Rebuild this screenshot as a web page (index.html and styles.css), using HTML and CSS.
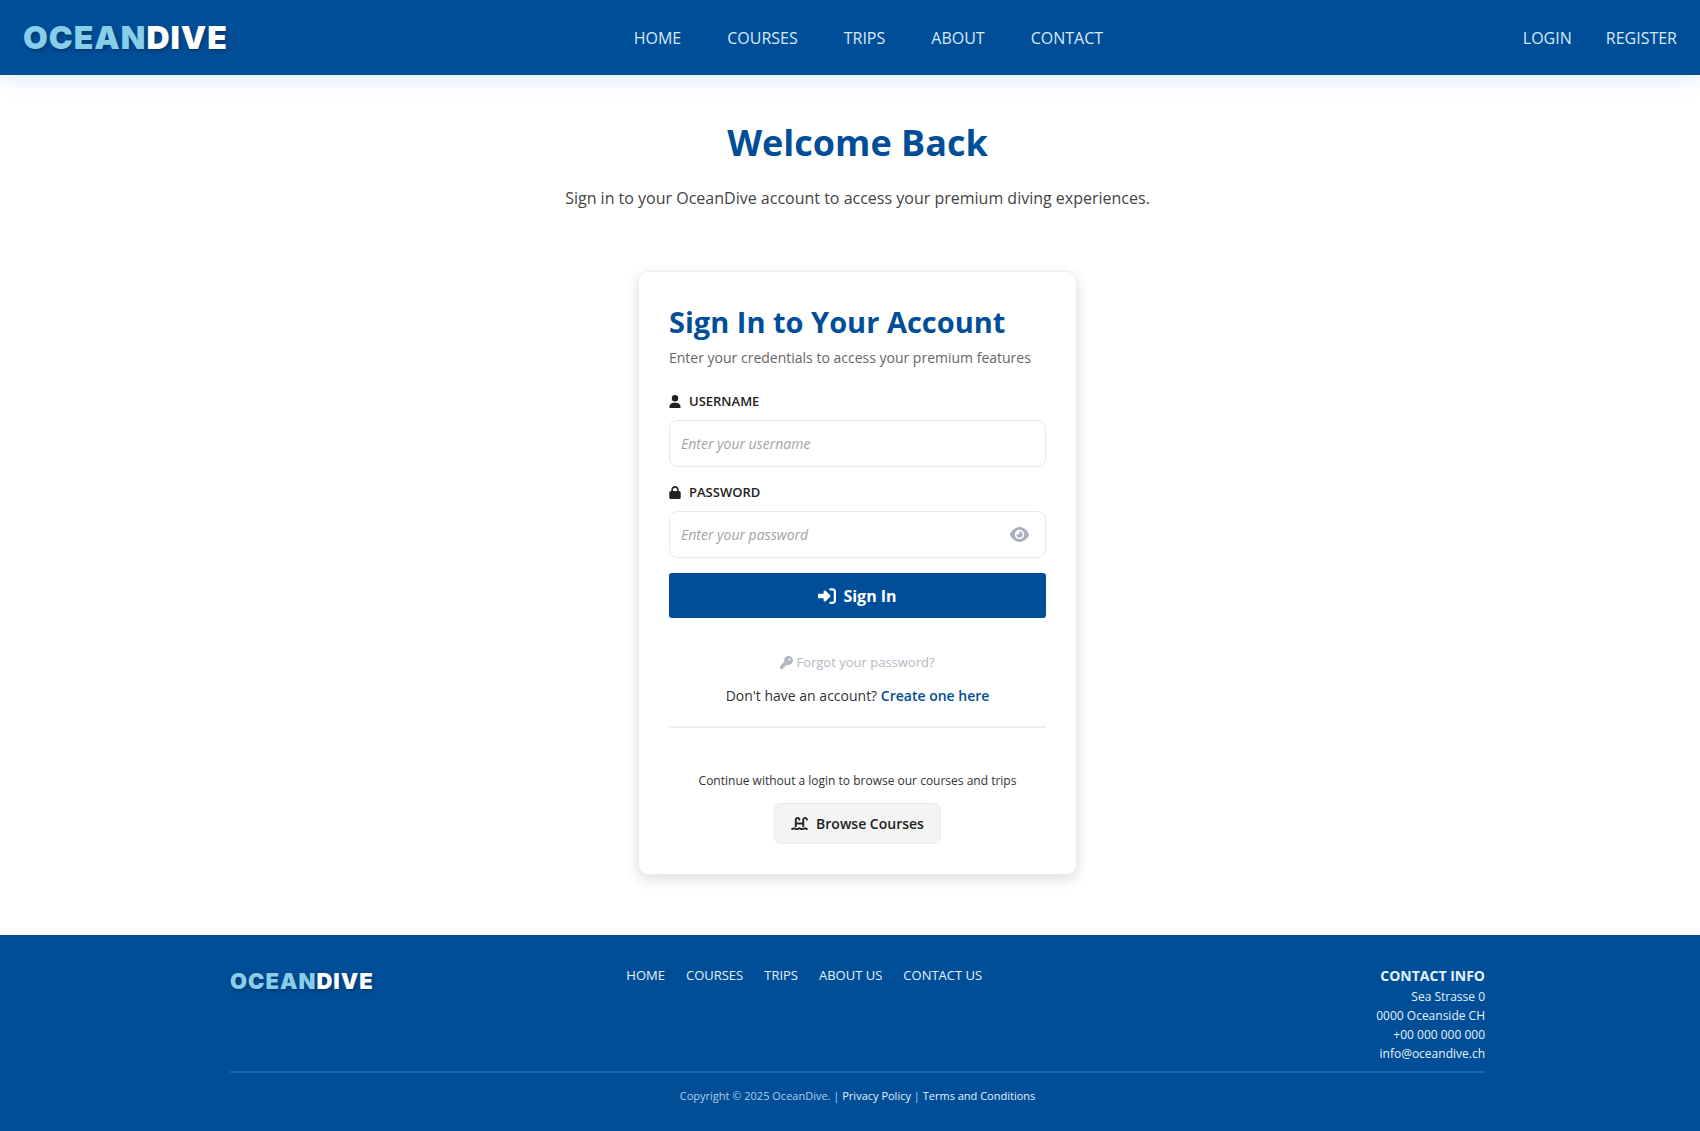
FILE: index.html
```html
<!DOCTYPE html>
<html lang="en">
<head>
<meta charset="utf-8">
<meta name="viewport" content="width=device-width, initial-scale=1">
<title>OceanDive – Sign In</title>
<link rel="stylesheet" href="styles.css">
</head>
<body>
<header class="site-header">
  <a class="logo" href="#"><span class="logo-light">OCEAN</span>DIVE</a>
  <nav class="main-nav" aria-label="Main">
    <a href="#">HOME</a>
    <a href="#">COURSES</a>
    <a href="#">TRIPS</a>
    <a href="#">ABOUT</a>
    <a href="#">CONTACT</a>
  </nav>
  <nav class="user-nav" aria-label="Account">
    <a href="#">LOGIN</a>
    <a href="#">REGISTER</a>
  </nav>
</header>

<main class="page">
  <h1 class="page-title">Welcome Back</h1>
  <p class="page-intro">Sign in to your OceanDive account to access your premium diving experiences.</p>

  <section class="card">
    <h2 class="card-title">Sign In to Your Account</h2>
    <p class="card-subtitle">Enter your credentials to access your premium features</p>

    <form class="login-form">
      <label class="field-label" for="username">
        <svg class="icon icon-label" viewBox="0 0 448 512" aria-hidden="true"><path d="M224 256A128 128 0 1 0 224 0a128 128 0 1 0 0 256zm-45.7 48C79.8 304 0 383.8 0 482.3C0 498.7 13.3 512 29.7 512H418.3c16.4 0 29.7-13.3 29.7-29.7C448 383.8 368.2 304 269.7 304H178.3z"/></svg>
        USERNAME
      </label>
      <input class="field-input" id="username" type="text" placeholder="Enter your username">

      <label class="field-label" for="password">
        <svg class="icon icon-label" viewBox="0 0 448 512" aria-hidden="true"><path d="M144 144v48H304V144c0-44.2-35.8-80-80-80s-80 35.8-80 80zM80 192V144C80 64.5 144.5 0 224 0s144 64.5 144 144v48h16c35.3 0 64 28.7 64 64V448c0 35.3-28.7 64-64 64H64c-35.3 0-64-28.7-64-64V256c0-35.3 28.7-64 64-64H80z"/></svg>
        PASSWORD
      </label>
      <div class="password-field">
        <input class="field-input" id="password" type="password" placeholder="Enter your password">
        <button class="toggle-password" type="button" aria-label="Show password">
          <svg class="icon icon-eye" viewBox="0 0 576 512" aria-hidden="true"><path d="M288 32c-80.8 0-145.5 36.8-192.6 80.6C48.6 156 17.3 208 2.5 243.7c-3.3 7.9-3.3 16.7 0 24.6C17.3 304 48.6 356 95.4 399.4C142.5 443.2 207.2 480 288 480s145.5-36.8 192.6-80.6c46.8-43.5 78.1-95.4 93-131.1c3.3-7.9 3.3-16.7 0-24.6c-14.9-35.7-46.2-87.7-93-131.1C433.5 68.8 368.8 32 288 32zM144 256a144 144 0 1 1 288 0 144 144 0 1 1 -288 0zm144-64c0 35.3-28.7 64-64 64c-7.1 0-13.9-1.2-20.3-3.3c-5.5-1.8-11.9 1.6-11.7 7.4c.3 6.9 1.3 13.8 3.2 20.7c13.7 51.2 66.4 81.6 117.6 67.9s81.6-66.4 67.9-117.6c-11.1-41.5-47.8-69.4-88.6-71.1c-5.8-.2-9.2 6.1-7.4 11.7c2.1 6.4 3.3 13.2 3.3 20.3z"/></svg>
        </button>
      </div>

      <button class="btn-primary" type="submit">
        <svg class="icon icon-signin" viewBox="0 0 512 512" aria-hidden="true"><path d="M217.9 105.9L340.7 228.7c7.2 7.2 11.3 17.1 11.3 27.3s-4.1 20.1-11.3 27.3L217.9 406.1c-6.4 6.4-15 9.9-24 9.9c-18.7 0-33.9-15.2-33.9-33.9l0-62.1L32 320c-17.7 0-32-14.3-32-32l0-64c0-17.7 14.3-32 32-32l128 0 0-62.1c0-18.7 15.2-33.9 33.9-33.9c9 0 17.6 3.6 24 9.9zM352 416l64 0c17.7 0 32-14.3 32-32l0-256c0-17.7-14.3-32-32-32l-64 0c-17.7 0-32-14.3-32-32s14.3-32 32-32l64 0c53 0 96 43 96 96l0 256c0 53-43 96-96 96l-64 0c-17.7 0-32-14.3-32-32s14.3-32 32-32z"/></svg>
        Sign In
      </button>
    </form>

    <a class="forgot" href="#">
      <svg class="icon icon-key" viewBox="0 0 512 512" aria-hidden="true"><path d="M336 352c97.2 0 176-78.8 176-176S433.2 0 336 0S160 78.8 160 176c0 18.7 2.9 36.8 8.3 53.7L7 391c-4.5 4.5-7 10.6-7 17v80c0 13.3 10.7 24 24 24h80c13.3 0 24-10.7 24-24V448h40c13.3 0 24-10.7 24-24V384h40c6.4 0 12.5-2.5 17-7l33.3-33.3c16.9 5.4 35 8.3 53.7 8.3zM376 96a40 40 0 1 1 0 80 40 40 0 1 1 0-80z"/></svg>
      Forgot your password?
    </a>
    <p class="signup">Don't have an account? <a href="#">Create one here</a></p>

    <div class="guest">
      <p class="guest-text">Continue without a login to browse our courses and trips</p>
      <a class="btn-secondary" href="#">
        <svg class="icon icon-ladder" viewBox="0 0 576 512" aria-hidden="true"><path d="M128 127.7C128 74.9 170.9 32 223.7 32c48.3 0 89 36 95 83.9l1 8.2c2.2 17.5-10.2 33.5-27.8 35.7s-33.5-10.2-35.7-27.8l-1-8.2c-2-15.9-15.5-27.8-31.5-27.8c-17.5 0-31.7 14.2-31.7 31.7V224H384V127.7C384 74.9 426.9 32 479.7 32c48.3 0 89 36 95 83.9l1 8.2c2.2 17.5-10.2 33.5-27.8 35.7s-33.5-10.2-35.7-27.8l-1-8.2c-2-15.9-15.5-27.8-31.5-27.8c-17.5 0-31.7 14.2-31.7 31.7V361c-1.6 1-3.3 2-4.8 3.1c-18 12.4-40.1 20.3-59.2 20.3h0V288H192v96.5c-19 0-41.2-7.9-59.1-20.3c-1.6-1.1-3.2-2.2-4.9-3.1V127.7zM306.5 389.9C329 405.4 356.5 416 384 416c26.9 0 55.4-10.8 77.4-26.1l0 0c11.9-8.5 28.1-7.8 39.2 1.7c14.4 11.9 32.5 21 50.6 25.2c17.2 4 27.9 21.2 23.9 38.4s-21.2 27.9-38.4 23.9c-24.5-5.7-44.9-16.5-58.2-25C449.5 469.7 417 480 384 480c-31.9 0-60.6-9.9-80.4-18.9c-5.8-2.7-11.1-5.3-15.6-7.7c-4.5 2.4-9.7 5.1-15.6 7.7c-19.8 9-48.5 18.9-80.4 18.9c-33 0-65.5-10.3-94.5-25.8c-13.4 8.4-33.7 19.3-58.2 25c-17.2 4-34.4-6.7-38.4-23.9s6.7-34.4 23.9-38.4c18.1-4.2 36.2-13.3 50.6-25.2c11.1-9.4 27.3-10.1 39.2-1.7l0 0C136.7 405.2 165.1 416 192 416c27.5 0 55-10.6 77.5-26.1c11.1-7.9 25.9-7.9 37 0z"/></svg>
        Browse Courses
      </a>
    </div>
  </section>
</main>

<footer class="site-footer">
  <div class="footer-inner">
    <div class="footer-top">
      <div><a class="logo logo-small" href="#"><span class="logo-light">OCEAN</span>DIVE</a></div>
      <nav class="footer-nav" aria-label="Footer">
        <a href="#">HOME</a>
        <a href="#">COURSES</a>
        <a href="#">TRIPS</a>
        <a href="#">ABOUT US</a>
        <a href="#">CONTACT US</a>
      </nav>
      <address class="contact">
        <strong class="contact-title">CONTACT INFO</strong>
        <span>Sea Strasse 0</span>
        <span>0000 Oceanside CH</span>
        <span>+00 000 000 000</span>
        <a href="#">info@oceandive.ch</a>
      </address>
    </div>
    <p class="copyright">Copyright © 2025 OceanDive. | <a href="#">Privacy Policy</a> | <a href="#">Terms and Conditions</a></p>
  </div>
</footer>
</body>
</html>
```
FILE: styles.css
```css
:root {
  --ocean: #004e98;
  --sky: #87ceeb;
  --ink: #222222;
  --line: #e8eaed;
  --muted: #b3b8c4;
}

* {
  box-sizing: border-box;
}

body {
  margin: 0;
  min-height: 100vh;
  display: flex;
  flex-direction: column;
  background: #ffffff;
  color: var(--ink);
  font-family: "Segoe UI", "Open Sans", "Noto Sans", sans-serif;
  font-size: 14px;
  line-height: 20px;
}

h1,
h2,
p {
  margin: 0;
}

a {
  color: inherit;
  text-decoration: none;
}

.icon {
  display: block;
  flex: none;
  fill: currentColor;
}

.logo {
  color: #ffffff;
  font-family: "Arial Black", Inter, sans-serif;
  font-size: 32px;
  font-weight: 900;
  line-height: 40px;
  letter-spacing: 1px;
  text-shadow: 1px 2px 4px rgba(0, 0, 0, 0.3);
}

.logo-light {
  color: var(--sky);
}

.logo-small {
  font-size: 22px;
  line-height: 32px;
}

/* Header */
.site-header {
  position: relative;
  display: flex;
  align-items: center;
  justify-content: space-between;
  min-height: 75px;
  padding: 0 23px;
  background: var(--ocean);
  box-shadow: 0 4px 20px rgba(0, 102, 255, 0.14);
  color: #d6eaf8;
  font-size: 16px;
}

.main-nav {
  display: flex;
  gap: 46px;
}

.user-nav {
  display: flex;
  gap: 34px;
  padding-left: 14px;
}

/* Page */
.page {
  flex: 1;
  display: flex;
  flex-direction: column;
  align-items: center;
  padding: 42px 0 60px 15px;
}

.page-title {
  color: var(--ocean);
  font-size: 36px;
  font-weight: 700;
  line-height: 52px;
}

.page-intro {
  margin-top: 16px;
  color: #444444;
  font-size: 16px;
  line-height: 26px;
}

/* Sign-in card */
.card {
  display: flex;
  flex-direction: column;
  width: 100%;
  max-width: 439px;
  margin-top: 60px;
  padding: 30px;
  border: 1px solid #ededed;
  border-radius: 10px;
  background: #ffffff;
  box-shadow: 0 4px 14px rgba(0, 0, 0, 0.14);
}

.card-title {
  color: var(--ocean);
  font-size: 29px;
  font-weight: 700;
  line-height: 40px;
}

.card-subtitle {
  margin-top: 6px;
  color: #666666;
  line-height: 20px;
}

.login-form {
  display: flex;
  flex-direction: column;
  margin-top: 23px;
}

.field-label {
  display: flex;
  align-items: center;
  gap: 8px;
  margin-bottom: 9px;
  font-size: 13px;
  font-weight: 600;
  line-height: 20px;
}

.icon-label {
  width: 12px;
  height: 13px;
}

.field-input {
  width: 100%;
  height: 47px;
  margin-bottom: 15px;
  padding: 0 11px;
  border: 1px solid var(--line);
  border-radius: 8px;
  background: #ffffff;
  color: var(--ink);
  font: inherit;
}

.field-input::placeholder {
  color: #a3a3a3;
  font-style: italic;
}

.password-field {
  position: relative;
}

.toggle-password {
  position: absolute;
  top: 8px;
  right: 11px;
  display: grid;
  place-items: center;
  width: 31px;
  height: 31px;
  padding: 0;
  border: 0;
  background: none;
  color: #a9afbe;
}

.icon-eye {
  width: 19px;
  height: 17px;
}

.btn-primary {
  display: flex;
  align-items: center;
  justify-content: center;
  gap: 7px;
  height: 45px;
  border: 0;
  border-radius: 3px;
  background: var(--ocean);
  color: #ffffff;
  font: inherit;
  font-size: 16px;
  font-weight: 700;
}

.icon-signin {
  width: 18px;
  height: 18px;
}

.forgot {
  display: flex;
  align-items: center;
  align-self: center;
  gap: 3px;
  margin-top: 34px;
  color: var(--muted);
  font-size: 13px;
}

.icon-key {
  width: 13px;
  height: 13px;
}

.signup {
  margin-top: 14px;
  padding-bottom: 20px;
  border-bottom: 2px solid #f0f0f2;
  color: #333333;
  text-align: center;
}

.signup a {
  color: var(--ocean);
  font-weight: 600;
}

.guest {
  display: flex;
  flex-direction: column;
  align-items: center;
  gap: 12px;
  padding-top: 43px;
}

.guest-text {
  color: #333333;
  font-size: 12px;
}

.btn-secondary {
  display: flex;
  align-items: center;
  gap: 8px;
  height: 41px;
  padding: 0 16px;
  border: 1px solid var(--line);
  border-radius: 7px;
  background: #f4f4f4;
  font-weight: 600;
}

.icon-ladder {
  width: 17px;
  height: 15px;
}

/* Footer */
.site-footer {
  padding: 30px 0 26px 15px;
  background: var(--ocean);
  color: #e6f2fb;
}

.footer-inner {
  width: 100%;
  max-width: 1255px;
  margin: 0 auto;
}

.footer-top {
  display: grid;
  grid-template-columns: 6fr 9fr 4fr;
  padding-bottom: 8px;
  border-bottom: 2px solid #1f65a9;
}

.footer-nav {
  display: flex;
  gap: 21px;
  font-size: 13px;
}

.contact {
  display: flex;
  flex-direction: column;
  align-items: flex-end;
  font-size: 12px;
  font-style: normal;
  line-height: 19px;
}

.contact-title {
  font-size: 14px;
  line-height: 22px;
}

.copyright {
  padding-top: 13px;
  color: #b0cde6;
  font-size: 11px;
  text-align: center;
}

.copyright a {
  color: #e6f2fb;
}
```
